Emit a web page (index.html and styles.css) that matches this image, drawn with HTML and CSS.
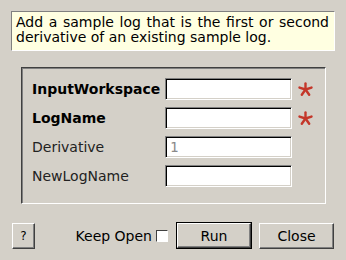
FILE: index.html
```html
<!DOCTYPE html>
<html lang="en">
<head>
  <meta charset="UTF-8">
  <title>GetSampleLogDerivative</title>
  <link rel="stylesheet" href="styles.css">
</head>
<body>
<div class="dialog">
  <div class="desc">Add a sample log that is the first or second derivative of an existing sample log.</div>

  <div class="group">
    <div class="row">
      <label class="name bold">InputWorkspace</label>
      <span class="field"></span>
      <svg class="star" width="15" height="15" viewBox="0 0 15 15"><g stroke="#c4372a" stroke-width="2.4" stroke-linecap="round"><line x1="7.5" y1="7.5" x2="7.5" y2="1.4"/><line x1="7.5" y1="7.5" x2="1.5" y2="5.6"/><line x1="7.5" y1="7.5" x2="13.5" y2="5.6"/><line x1="7.5" y1="7.5" x2="3.8" y2="12.8"/><line x1="7.5" y1="7.5" x2="11.2" y2="12.8"/></g></svg>
    </div>
    <div class="row">
      <label class="name bold">LogName</label>
      <span class="field"></span>
      <svg class="star" width="15" height="15" viewBox="0 0 15 15"><g stroke="#c4372a" stroke-width="2.4" stroke-linecap="round"><line x1="7.5" y1="7.5" x2="7.5" y2="1.4"/><line x1="7.5" y1="7.5" x2="1.5" y2="5.6"/><line x1="7.5" y1="7.5" x2="13.5" y2="5.6"/><line x1="7.5" y1="7.5" x2="3.8" y2="12.8"/><line x1="7.5" y1="7.5" x2="11.2" y2="12.8"/></g></svg>
    </div>
    <div class="row">
      <label class="name">Derivative</label>
      <span class="field hint">1</span>
    </div>
    <div class="row">
      <label class="name">NewLogName</label>
      <span class="field"></span>
    </div>
  </div>

  <div class="buttons">
    <span class="btn help">?</span>
    <span class="keep">Keep Open <span class="check"></span></span>
    <span class="btn run"><span>Run</span></span>
    <span class="btn close">Close</span>
  </div>
</div>
</body>
</html>
```

FILE: styles.css
```css
* {
  margin: 0;
  padding: 0;
  box-sizing: border-box;
}
html, body {
  width: 346px;
  height: 260px;
  background: #d4d0c8;
  overflow: hidden;
}
body {
  font-family: "DejaVu Sans", sans-serif;
  font-size: 14px;
  color: #000;
}
.dialog {
  padding: 11px 12px 0 11px;
}
.desc {
  width: 324px;
  height: 40px;
  background: #ffffe1;
  border: 1px solid;
  border-color: #808080 #fff #fff #808080;
  padding: 3px 5px 0 4px;
  line-height: 15px;
  text-align: justify;
}
.group {
  margin: 16px 0 0 10px;
  width: 305px;
  height: 137px;
  border: 1px solid;
  border-color: #404040 #fff #fff #404040;
  box-shadow: inset 1px 1px 0 #808080;
  padding: 10px 0 0 10px;
}
.row {
  display: flex;
  align-items: center;
  height: 22px;
  margin-bottom: 7px;
}
.name {
  width: 133px;
  color: #222;
}
.name.bold {
  font-weight: bold;
  color: #000;
}
.field {
  width: 127px;
  height: 22px;
  background: #fff;
  border: 1px solid;
  border-color: #808080 #fff #fff #808080;
  box-shadow: inset 1px 1px 0 #000, inset -1px -1px 0 #d4d0c8;
  padding: 1px 0 0 4px;
  line-height: 18px;
}
.hint {
  color: #8a8a8a;
  font-family: "DejaVu Sans Mono", monospace;
}
.star {
  margin-left: 6px;
}
.buttons {
  display: flex;
  align-items: center;
  margin-top: 18px;
  padding-left: 1px;
}
.btn {
  display: flex;
  align-items: center;
  justify-content: center;
  height: 26px;
  background: #d4d0c8;
  border: 1px solid;
  border-color: #fff #404040 #404040 #fff;
  box-shadow: inset -1px -1px 0 #808080;
}
.help {
  width: 23px;
  font-size: 12px;
}
.keep {
  display: flex;
  align-items: center;
  margin-left: auto;
}
.check {
  display: inline-block;
  width: 12px;
  height: 12px;
  margin-left: 4px;
  background: #fff;
  border: 1px solid;
  border-color: #404040 #fff #fff #404040;
  box-shadow: 1px 1px 0 #d4d0c8;
}
.run {
  width: 76px;
  height: 27px;
  margin-left: 8px;
  border: 1px solid #000;
  box-shadow: none;
  padding: 0;
}
.run span {
  display: flex;
  align-items: center;
  justify-content: center;
  width: 100%;
  height: 100%;
  border: 1px solid;
  border-color: #fff #404040 #404040 #fff;
  box-shadow: inset -1px -1px 0 #808080;
}
.close {
  width: 75px;
  margin-left: 7px;
}
```
